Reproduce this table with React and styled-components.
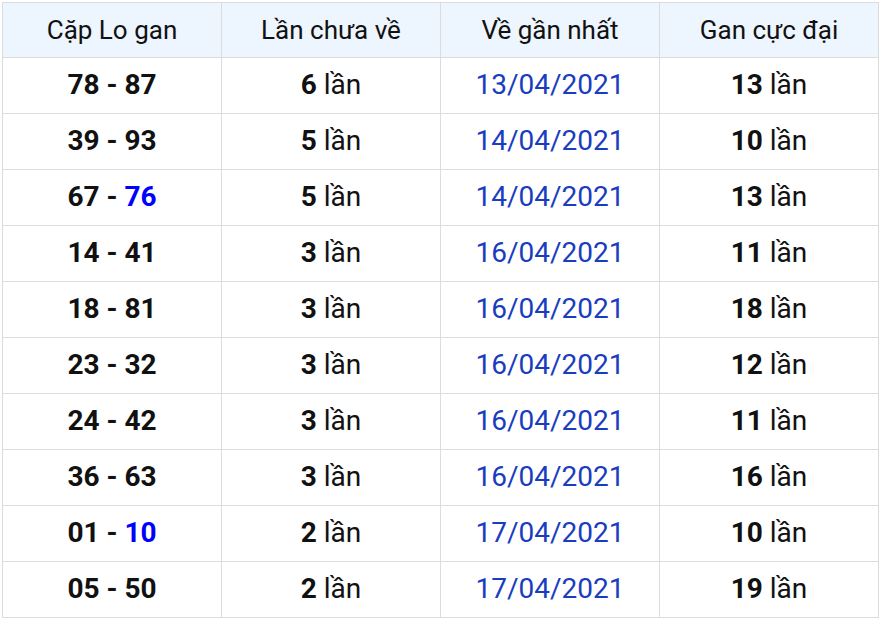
import React from 'react'
import styled, { createGlobalStyle } from 'styled-components'

const GlobalStyle = createGlobalStyle`
  html, body {
    margin: 0;
    padding: 0;
    background: #fff;
  }
  body {
    font-family: Roboto, "Noto Sans", sans-serif;
    color: #111;
  }
`

const Wrapper = styled.div`
  padding: 2px 3px 0 2px;
`

const Table = styled.table`
  width: 877px;
  border-collapse: collapse;
  table-layout: fixed;
  font-size: 28px;
`

const HeadCell = styled.th`
  height: 54px;
  background-color: #edf5fe;
  border: 1px solid #dcdcdc;
  font-size: 26px;
  font-weight: 400;
  text-align: center;
  padding: 0;
  color: #111;
`

const Cell = styled.td`
  height: 56px;
  box-sizing: border-box;
  border: 1px solid #dcdcdc;
  text-align: center;
  padding: 0 0 2px;
  color: ${props => (props.$date ? '#1a3dc0' : '#111')};
`

const Num = styled.b`
  font-weight: 700;
  color: ${props => (props.$blue ? '#0000ff' : 'inherit')};
`

const rows = [
  ['78', '87', false, 6, '13/04/2021', 13],
  ['39', '93', false, 5, '14/04/2021', 10],
  ['67', '76', true, 5, '14/04/2021', 13],
  ['14', '41', false, 3, '16/04/2021', 11],
  ['18', '81', false, 3, '16/04/2021', 18],
  ['23', '32', false, 3, '16/04/2021', 12],
  ['24', '42', false, 3, '16/04/2021', 11],
  ['36', '63', false, 3, '16/04/2021', 16],
  ['01', '10', true, 2, '17/04/2021', 10],
  ['05', '50', false, 2, '17/04/2021', 19],
]

export default function App() {
  return (
    <Wrapper>
      <GlobalStyle />
      <Table>
        <thead>
          <tr>
            <HeadCell>Cặp Lo gan</HeadCell>
            <HeadCell>Lần chưa về</HeadCell>
            <HeadCell>Về gần nhất</HeadCell>
            <HeadCell>Gan cực đại</HeadCell>
          </tr>
        </thead>
        <tbody>
          {rows.map(([a, b, blue, miss, date, max]) => (
            <tr key={a + b}>
              <Cell>
                <Num>{a} - </Num>
                <Num $blue={blue}>{b}</Num>
              </Cell>
              <Cell>
                <Num>{miss}</Num> lần
              </Cell>
              <Cell $date>{date}</Cell>
              <Cell>
                <Num>{max}</Num> lần
              </Cell>
            </tr>
          ))}
        </tbody>
      </Table>
    </Wrapper>
  )
}
